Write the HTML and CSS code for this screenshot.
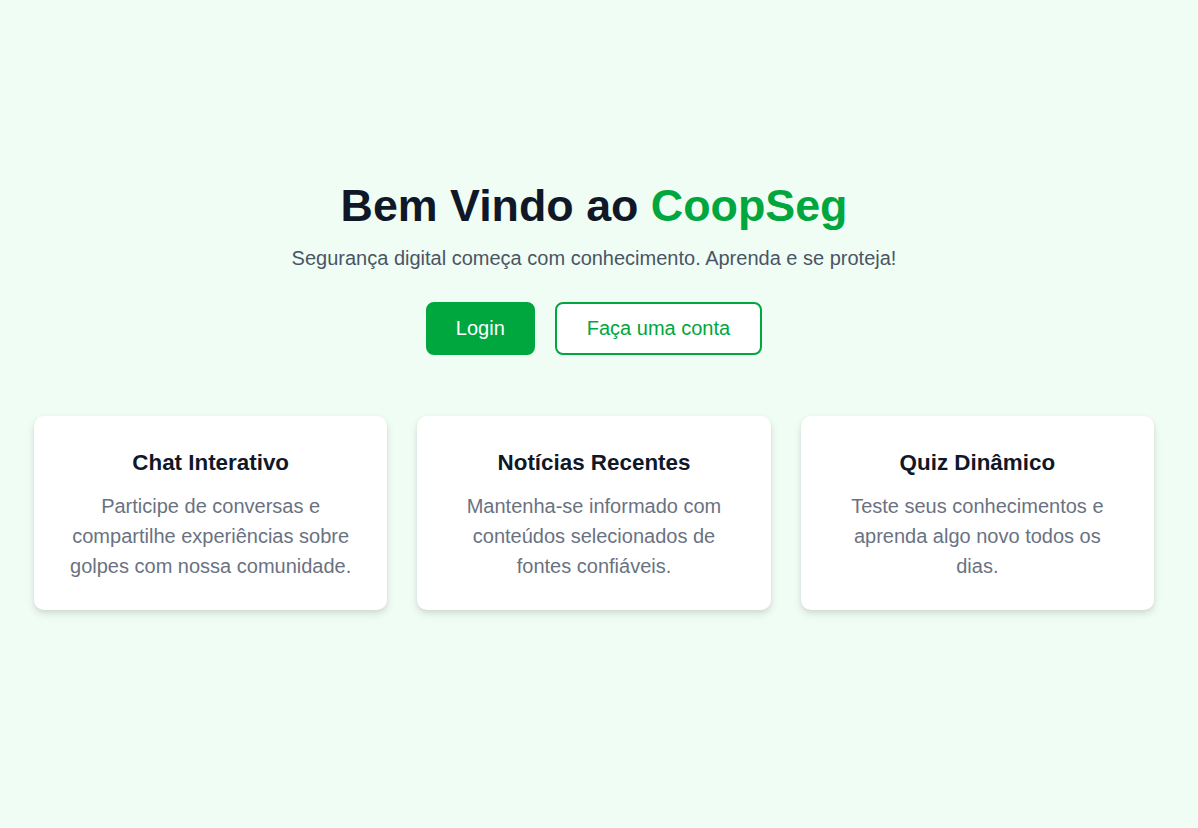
FILE: index.html
```html
<!DOCTYPE html>
<html lang="pt-BR">
<head>
    <meta charset="UTF-8">
    <meta name="viewport" content="width=device-width, initial-scale=1.0">
    <title>CoopSeg</title>
    <link rel="stylesheet" href="styles.css">
</head>
<body>
    <main class="page">
        <section class="hero">
            <h1>Bem Vindo ao <span class="brand">CoopSeg</span></h1>
            <p class="tagline">Segurança digital começa com conhecimento. Aprenda e se proteja!</p>
            <div class="actions">
                <a href="#" class="btn btn-primary">Login</a>
                <a href="#" class="btn btn-outline">Faça uma conta</a>
            </div>
        </section>

        <section class="features">
            <div class="card">
                <h2>Chat Interativo</h2>
                <p>Participe de conversas e compartilhe experiências sobre golpes com nossa comunidade.</p>
            </div>
            <div class="card">
                <h2>Notícias Recentes</h2>
                <p>Mantenha-se informado com conteúdos selecionados de fontes confiáveis.</p>
            </div>
            <div class="card">
                <h2>Quiz Dinâmico</h2>
                <p>Teste seus conhecimentos e aprenda algo novo todos os dias.</p>
            </div>
        </section>
    </main>
</body>
</html>
```

FILE: styles.css
```css
/* Reset */
* {
    margin: 0;
    padding: 0;
    box-sizing: border-box;
}

body {
    font-family: 'Liberation Sans', Arial, sans-serif;
    background-color: #f0fdf4;
    color: #101828;
}

/* Kontainer utama */
.page {
    min-height: 100vh;
    display: flex;
    flex-direction: column;
    justify-content: center;
    align-items: center;
    padding: 0 44px 39px 34px;
}

.hero {
    text-align: center;
}

h1 {
    font-size: 2.8rem;
    font-weight: bold;
    line-height: 1.2;
}

.brand {
    color: #00a63e;
}

.tagline {
    margin-top: 14px;
    font-size: 1.25rem;
    color: #4a5565;
}

.actions {
    display: flex;
    justify-content: center;
    gap: 20px;
    margin-top: 32px;
}

.btn {
    display: inline-block;
    padding: 13px 28px;
    font-size: 1.25rem;
    line-height: 23px;
    text-decoration: none;
    border-radius: 8px;
    border: 2px solid #00a63e;
}

.btn-primary {
    background-color: #00a63e;
    color: white;
}

.btn-outline {
    padding: 13px 30px;
    background-color: white;
    color: #00a63e;
}

/* Kartu fitur */
.features {
    display: grid;
    grid-template-columns: repeat(3, 1fr);
    gap: 30px;
    width: 100%;
    margin-top: 61px;
}

.card {
    background-color: white;
    border-radius: 10px;
    padding: 34px 32px 29px;
    text-align: center;
    box-shadow: 0 4px 8px rgba(0, 0, 0, 0.1), 0 2px 4px rgba(0, 0, 0, 0.06);
}

.card h2 {
    font-size: 1.4rem;
    font-weight: bold;
    line-height: 1.2;
    margin-bottom: 14px;
}

.card p {
    font-size: 1.25rem;
    line-height: 1.5;
    color: #6a7282;
}
```
